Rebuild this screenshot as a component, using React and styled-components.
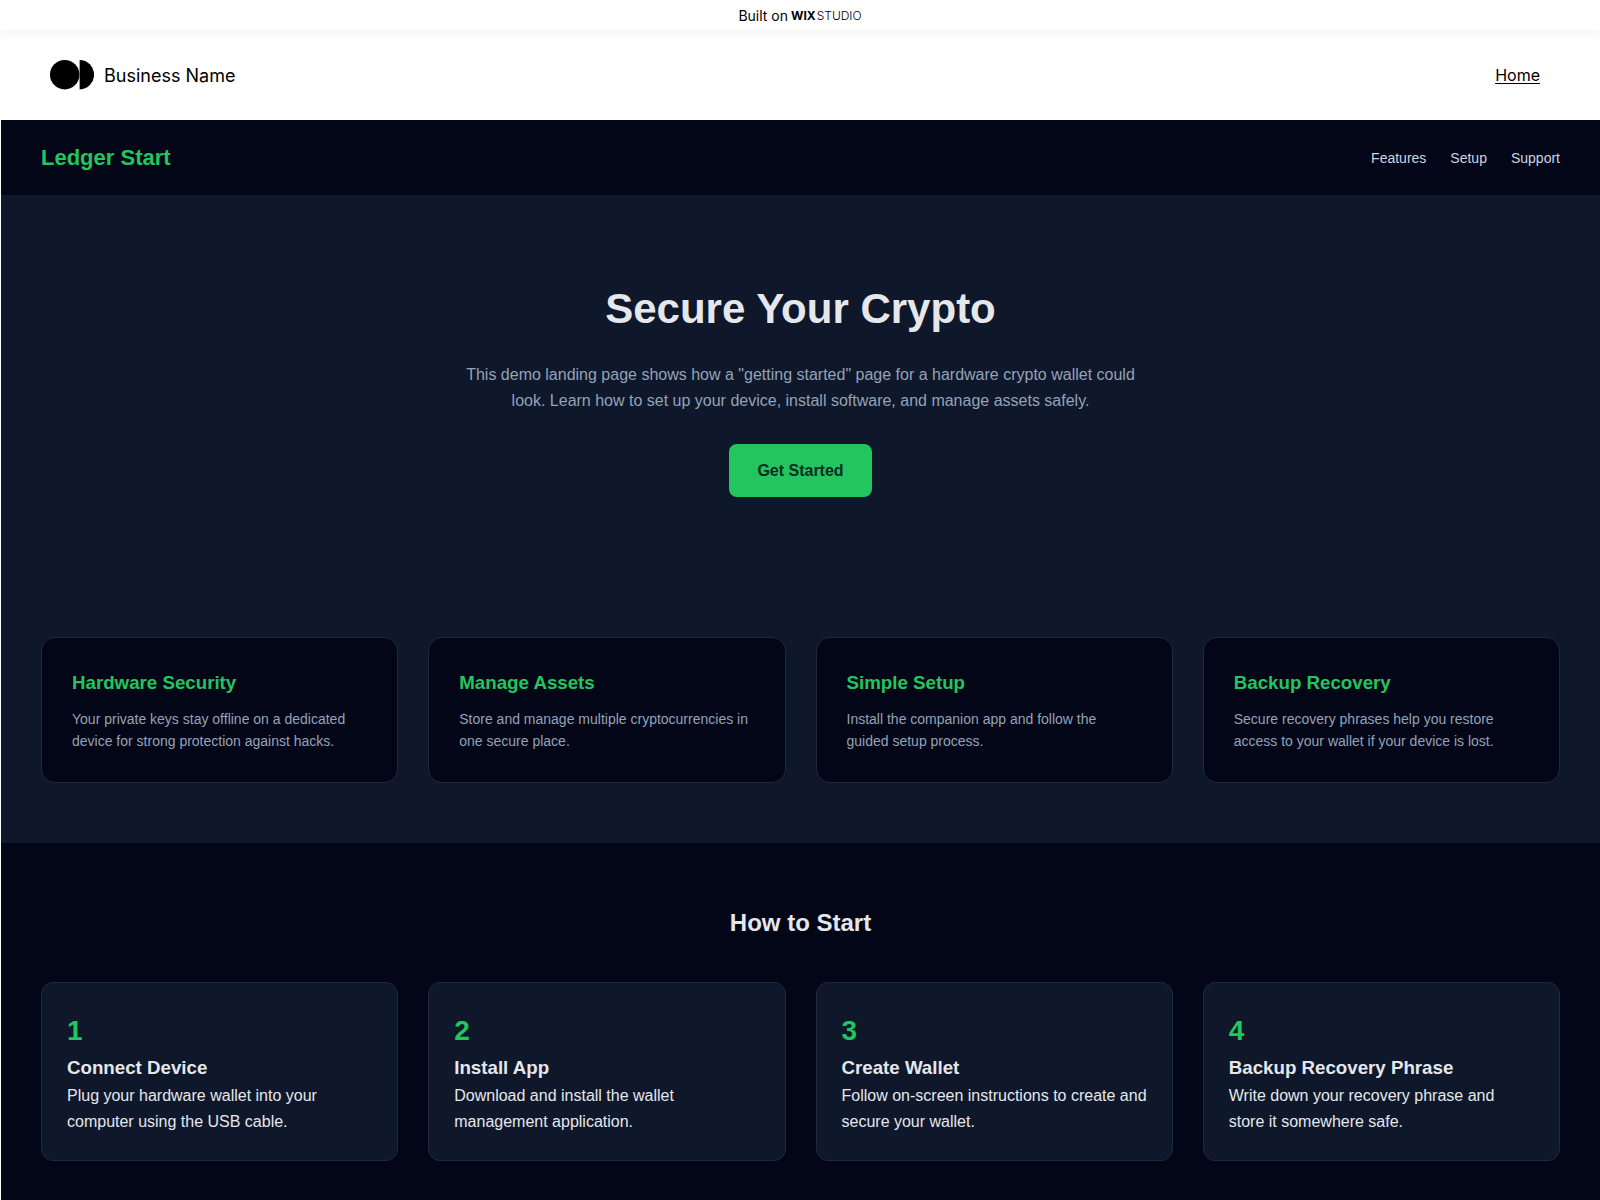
import React from 'react';
import styled, { createGlobalStyle } from 'styled-components';

const features = [
    { title: 'Hardware Security', text: 'Your private keys stay offline on a dedicated device for strong protection against hacks.' },
    { title: 'Manage Assets', text: 'Store and manage multiple cryptocurrencies in one secure place.' },
    { title: 'Simple Setup', text: 'Install the companion app and follow the guided setup process.' },
    { title: 'Backup Recovery', text: 'Secure recovery phrases help you restore access to your wallet if your device is lost.' },
];

const steps = [
    { title: 'Connect Device', text: 'Plug your hardware wallet into your computer using the USB cable.' },
    { title: 'Install App', text: 'Download and install the wallet management application.' },
    { title: 'Create Wallet', text: 'Follow on-screen instructions to create and secure your wallet.' },
    { title: 'Backup Recovery Phrase', text: 'Write down your recovery phrase and store it somewhere safe.' },
];

const App = () => {
    return (
        <>
            <GlobalStyle />
            <Banner href="#">
                <span>Built on</span>
                <WixMark><b>WIX</b><span>STUDIO</span></WixMark>
            </Banner>

            <SiteHeader>
                <Brand href="#">
                    <svg width="44" height="30" viewBox="0 0 44 30" aria-hidden="true">
                        <circle cx="14.7" cy="14.7" r="14.7" />
                        <path d="M29.6 0a14.5 14.7 0 0 1 0 29.4z" />
                    </svg>
                    Business Name
                </Brand>
                <nav>
                    <HomeLink href="#">Home</HomeLink>
                </nav>
            </SiteHeader>

            <Landing>
                <TopBar>
                    <Logo>Ledger Start</Logo>
                    <NavLinks>
                        <NavLink href="#features">Features</NavLink>
                        <NavLink href="#setup">Setup</NavLink>
                        <NavLink href="#support">Support</NavLink>
                    </NavLinks>
                </TopBar>

                <Hero>
                    <h1>Secure Your Crypto</h1>
                    <p>
                        This demo landing page shows how a "getting started" page for a hardware crypto
                        wallet could look. Learn how to set up your device, install software, and manage
                        assets safely.
                    </p>
                    <StartButton type="button">Get Started</StartButton>
                </Hero>

                <FeatureGrid id="features">
                    {features.map((feature) => (
                        <FeatureCard key={feature.title}>
                            <h3>{feature.title}</h3>
                            <p>{feature.text}</p>
                        </FeatureCard>
                    ))}
                </FeatureGrid>

                <Setup id="setup">
                    <h2>How to Start</h2>
                    <StepGrid>
                        {steps.map((step, index) => (
                            <StepCard key={step.title}>
                                <StepNumber>{index + 1}</StepNumber>
                                <h3>{step.title}</h3>
                                <p>{step.text}</p>
                            </StepCard>
                        ))}
                    </StepGrid>
                </Setup>
            </Landing>
        </>
    )
}

const GlobalStyle = createGlobalStyle`
    *{
        box-sizing:border-box;
    }

    body{
        margin:0;
        background:#fff;
        font-family:"Liberation Sans", Arial, sans-serif;
    }

    h1, h2, h3, p{
        margin:0;
    }

    h3{
        line-height:30px;
    }
`;

const Banner = styled.a`
    position:relative;
    display:flex;
    justify-content:center;
    align-items:center;
    gap:3px;
    height:30px;
    background:#fff;
    color:#000;
    font-family:Inter, sans-serif;
    font-size:14px;
    text-decoration:none;
    box-shadow:0 4px 10px rgba(22, 45, 61, 0.05);
`;

const WixMark = styled.span`
    display:flex;
    gap:1px;
    font-size:12px;
    font-weight:300;

    b{
        font-weight:700;
    }
`;

const SiteHeader = styled.header`
    display:flex;
    justify-content:space-between;
    align-items:center;
    height:90px;
    padding:0 60px 0 50px;
    font-family:Inter, sans-serif;
`;

const Brand = styled.a`
    display:flex;
    align-items:center;
    gap:10px;
    color:#000;
    font-size:18px;
    text-decoration:none;
`;

const HomeLink = styled.a`
    color:#000;
    font-size:16px;
    text-underline-offset:2px;
`;

const Landing = styled.main`
    margin-left:1px;
    background:#0f172a;
    color:#e5e7eb;
`;

const TopBar = styled.div`
    display:flex;
    justify-content:space-between;
    align-items:center;
    padding:20px 40px;
    background:#020617;
`;

const Logo = styled.div`
    color:#22c55e;
    font-size:22px;
    font-weight:bold;
    line-height:35px;
`;

const NavLinks = styled.nav`
    display:flex;
    gap:24px;
`;

const NavLink = styled.a`
    color:#cbd5e1;
    font-size:14px;
    line-height:22px;
    text-decoration:none;
`;

const Hero = styled.section`
    display:flex;
    flex-direction:column;
    align-items:center;
    padding:80px 40px;
    text-align:center;

    h1{
        margin-bottom:20px;
        font-size:42px;
        line-height:67px;
    }

    p{
        max-width:700px;
        margin-bottom:30px;
        color:#94a3b8;
        font-size:16px;
        line-height:26px;
    }
`;

const StartButton = styled.button`
    padding:14px 28px;
    border:none;
    border-radius:8px;
    background:#22c55e;
    color:#022c22;
    font-family:inherit;
    font-size:16px;
    font-weight:bold;
    line-height:25px;
    cursor:pointer;
`;

const CardGrid = styled.div`
    display:grid;
    grid-template-columns:repeat(auto-fit, minmax(240px, 1fr));
    gap:30px;
`;

const FeatureGrid = styled(CardGrid)`
    padding:60px 40px;
`;

const StepGrid = styled(CardGrid)`
    text-align:left;
`;

const FeatureCard = styled.article`
    padding:30px;
    border:1px solid #1e293b;
    border-radius:14px;
    background:#020617;

    h3{
        margin-bottom:10px;
        color:#22c55e;
    }

    p{
        color:#94a3b8;
        font-size:14px;
        line-height:22px;
    }
`;

const Setup = styled.section`
    padding:60px 40px 40px;
    background:#020617;
    text-align:center;

    h2{
        margin-bottom:40px;
        font-size:24px;
        line-height:39px;
    }
`;

const StepCard = styled.article`
    padding:25px;
    border:1px solid #1e293b;
    border-radius:12px;
    background:#0f172a;

    p{
        font-size:16px;
        line-height:26px;
    }
`;

const StepNumber = styled.div`
    color:#22c55e;
    font-size:28px;
    font-weight:bold;
    line-height:45px;
`;


export default App;
